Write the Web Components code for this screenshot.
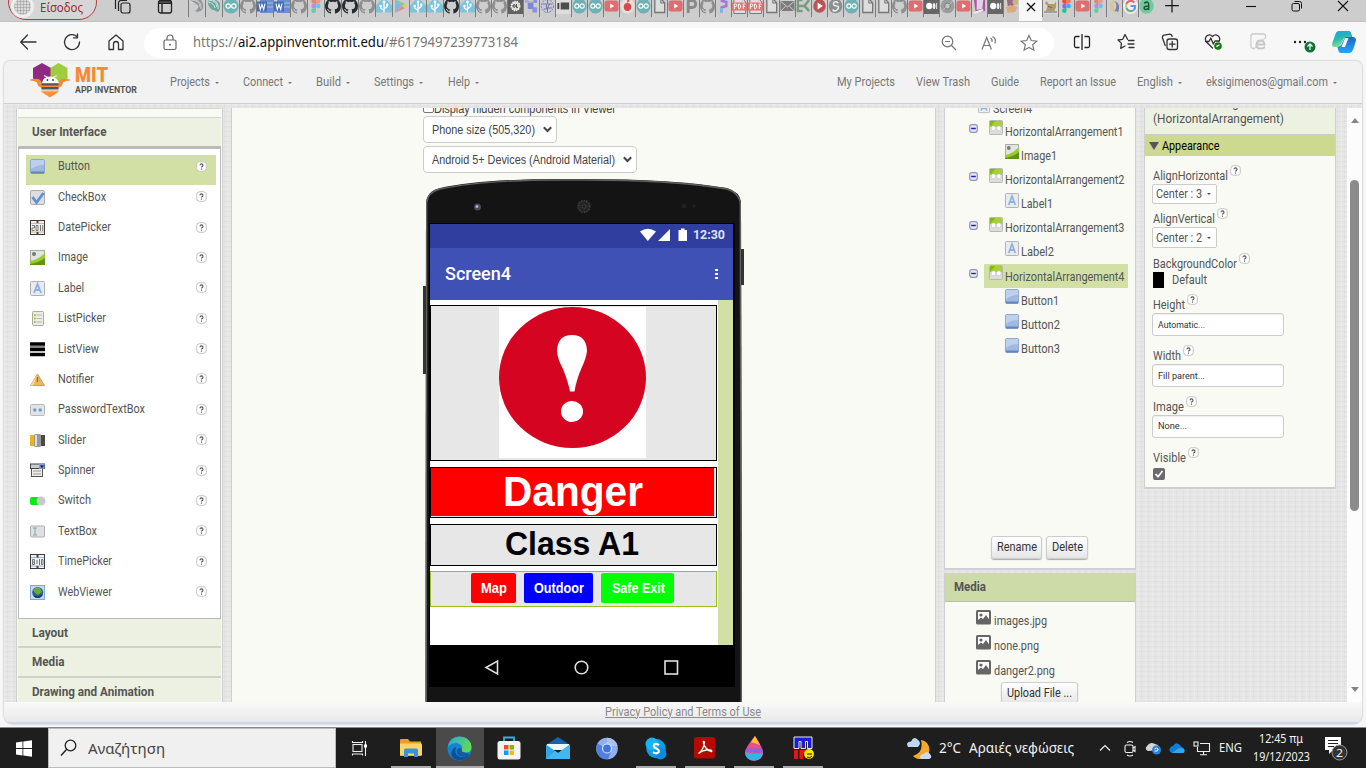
<!DOCTYPE html>
<html lang="el">
<head>
<meta charset="utf-8">
<title>MIT App Inventor</title>
<style>
html,body{margin:0;padding:0;width:1366px;height:768px;overflow:hidden;background:#f7f7f7}
body{font-family:Roboto,"Noto Sans",sans-serif}
</style>
</head>
<body>
<app-desktop></app-desktop>
<script>
const GH='M8 0C3.58 0 0 3.58 0 8c0 3.54 2.29 6.53 5.47 7.59.4.07.55-.17.55-.38 0-.19-.01-.82-.01-1.49-2.01.37-2.53-.49-2.69-.94-.09-.23-.48-.94-.82-1.13-.28-.15-.68-.52-.01-.53.63-.01 1.08.58 1.23.82.72 1.21 1.87.87 2.33.66.07-.52.28-.87.51-1.07-1.78-.2-3.64-.89-3.64-3.95 0-.87.31-1.59.82-2.15-.08-.2-.36-1.02.08-2.12 0 0 .67-.22 2.2.82.64-.18 1.32-.27 2-.27s1.36.09 2 .27c1.53-1.04 2.2-.82 2.2-.82.44 1.1.16 1.92.08 2.12.51.56.82 1.27.82 2.15 0 3.07-1.87 3.75-3.65 3.95.29.25.54.73.54 1.48 0 1.07-.01 1.93-.01 2.2 0 .21.15.46.55.38A8.01 8.01 0 0016 8c0-4.42-3.58-8-8-8z';
const figma=(o)=>`<g opacity="${o}"><path d="M8 1H5.7a2.3 2.3 0 0 0 0 4.7H8z" fill="#f24e1e"/><path d="M8 1h2.3a2.3 2.3 0 0 1 0 4.7H8z" fill="#ff7262"/><path d="M8 5.7H5.7a2.3 2.3 0 0 0 0 4.6H8z" fill="#a259ff"/><circle cx="10.3" cy="8" r="2.3" fill="#1abcfe"/><path d="M8 10.3H5.7A2.35 2.35 0 1 0 8 12.7z" fill="#0acf83"/></g>`;
const S='fill="none" stroke="#333" stroke-width="1.3" stroke-linecap="round" stroke-linejoin="round"';
/* name: [width, height, markup] */
const ICONS={
 swirlg:[16,16,'<path d="M2 2q5-3 10 0 4 5 1 10-4 3-7 1 4-2 3-6Q6 7 2 2z" fill="#8f9596"/><path d="M3 2q8 1 8 7M2 4q6 1 7 6M7 2q6 2 5 9" stroke="#ddd" fill="none" stroke-width=".8"/>'],
 swirlt:[16,16,'<path d="M2 3Q1 7 5 11l7 3 2-3V5L9 1 4 1z" fill="#69a69b"/><path d="M3 2q8 1 8 7M2 4q6 1 7 6M7 2q6 2 5 9" stroke="#d5e6e2" fill="none"/>'],
 ard:[16,16,'<circle cx="8" cy="8" r="7.6" fill="#6fb2b6"/><g fill="none" stroke="#fff" stroke-width="1.2"><circle cx="5.2" cy="8" r="2.2"/><circle cx="10.8" cy="8" r="2.2"/></g>'],
 ghg:[16,16,`<path d="${GH}" fill="#8e8e8e"/>`],
 ghb:[16,16,`<path d="${GH}" fill="#262b31"/>`],
 word:[16,16,'<rect x="3" y="1" width="13" height="14" fill="#6c8fcb"/><path d="M3 5h13M3 9h13" stroke="#a5bce0"/><rect x="0" y="3.5" width="10" height="10" fill="#456fb4"/><path d="M2 5.5l1.3 6L5 6.5l1.700 5L8 5.5" stroke="#fff" fill="none" stroke-width="1.1"/>'],
 figf:[16,16,figma(.55)], fig:[16,16,figma(1)],
 git:[16,16,'<path d="M8-.5L16 7.500v6L15 14.500H1L0 13.500V7.500z" fill="#7cc3de"/><path d="M8 14.500V4.500M8 12.500L4.700 10V8.500M8 11l3.300-2.500V7" stroke="#fff" fill="none" stroke-width="1.300"/><circle cx="8" cy="4" r="1.400" fill="#fff"/><circle cx="4.700" cy="8" r="1.300" fill="#fff"/><circle cx="11.300" cy="6.800" r="1.300" fill="#fff"/>'],
 play:[16,16,'<path d="M2 1v14l7-7z" fill="#7fb9dd"/><path d="M2 1l7 7 3-2.300z" fill="#86c79b"/><path d="M2 15l7-7 3 2.300z" fill="#e18a8c"/><path d="M9 8l3-2.300L15 8l-3 2.300z" fill="#e9c86f"/>'],
 ol:[16,16,'<rect width="16" height="16" fill="#626262"/><circle cx="8" cy="8" r="4.600" fill="#ddd"/><circle cx="8" cy="8" r="4.600" fill="none" stroke="#eee" stroke-dasharray="1.500 1" stroke-width="1.500"/><circle cx="6.500" cy="8" r="1.300" fill="none" stroke="#444"/><path d="M9 6v3.500h1.500" stroke="#444" fill="none"/>'],
 nodes:[16,16,'<path d="M3 4h6v6h4" stroke="#999" fill="none"/><rect x="1" y="1" width="4" height="4" fill="#a4aae0"/><rect x="4" y="5" width="6" height="6" fill="#7c86da"/><rect x="10" y="1" width="4" height="4" fill="#8a93dc"/><rect x="9" y="9.500" width="5" height="5" fill="#8a93dc"/>'],
 brain:[16,16,'<circle cx="8" cy="8" r="6.500" fill="#c8c8d8" stroke="#7d80a4" stroke-dasharray="2 1"/><path d="M3 6h4v5H4M8 2v4h5M8 14v-4h5M10 6l-2 4" stroke="#73769f" fill="none"/>'],
 med0:[16,16,'<rect width="16" height="16" fill="#ddd"/><rect x="1.500" y="5" width="2" height="6" fill="#444"/><rect x="5" y="4.500" width="9" height="7" fill="#4d4d4d"/>'],
 med:[16,16,'<rect width="16" height="16" fill="#666"/><circle cx="5.500" cy="8" r="3.200" fill="#fff"/><ellipse cx="10.700" cy="8" rx="1.500" ry="3.100" fill="#eee"/><rect x="13" y="5" width="1" height="6" fill="#eee"/>'],
 yt:[16,16,'<rect x=".5" y="2.500" width="15" height="11" rx="2.500" fill="#e26d6f"/><path d="M6.500 5.500v5L11 8z" fill="#fff"/>'],
 flame:[16,16,'<circle cx="8" cy="8" r="7.500" fill="#e8dede"/><circle cx="8" cy="9" r="4" fill="#d44a4c"/><path d="M8 5Q7 2 9 0l1 3z" fill="#d44a4c"/>'],
 doc:[16,16,'<path d="M3 .5h6.500L13.500 5v9.500H3z" fill="#ddd" stroke="#777" stroke-width="1.400"/><path d="M9.500 0v5h4" fill="none" stroke="#777" stroke-width="1.200"/>'],
 P:[16,16,'<path d="M4.500 15V2.500H9a3.500 3.500 0 0 1 0 7H5" stroke="#888" stroke-width="3" fill="none"/>'],
 ques:[16,16,'<path d="M5 2.500l6 1.500v4L6 9.500V15" stroke="#a574d8" stroke-width="2.600" fill="none"/><path d="M6 10v5" stroke="#7bb7e8" stroke-width="3"/>'],
 pdf:[16,16,'<path d="M2 0h9l3.500 4v11.500H2z" fill="#ddd" stroke="#777"/><rect x="0" y="4.500" width="16" height="8" fill="#e57373"/><path d="M2.500 11V6h1.300a1.200 1.200 0 0 1 0 2.600H2.500M7 6v4.800c3 .3 3-5 0-4.700M12 11V6h2.300M12 8.500h2" stroke="#fff" fill="none"/>'],
 mail:[16,16,'<rect x=".5" y="3" width="15" height="10" fill="#7c7c7c"/><path d="M1 3.500L8 9l7-5.500M1 13l5-5M15 13l-5-5" stroke="#ccc" fill="none"/>'],
 xg:[16,16,'<path d="M7 2H2v11h5M14 2l-5 6 5 5M2 8h7" stroke="#7b9a80" stroke-width="2.600" fill="none"/>'],
 rplay:[16,16,'<circle cx="8" cy="8" r="6.700" fill="#b95558"/><path d="M6 4.500v7L11.500 8z" fill="#fff"/>'],
 Sic:[16,16,'<circle cx="8" cy="8" r="7.300" fill="#8b8f92"/><path d="M11 5Q7 2.500 6 5t3 3 1 3.500-5 0" stroke="#eee" stroke-width="1.600" fill="none"/>'],
 disc:[16,16,'<circle cx="8" cy="8" r="7.300" fill="#9c9c9c"/><circle cx="8" cy="8" r="3" fill="#c6c6c6" stroke="#777"/><path d="M3 12L13 4" stroke="#bbb"/>'],
 pur:[16,16,'<path d="M2 1l12 1v11L4 15z" fill="#a9579f"/><path d="M5 1l7 1-1 9-6 1z" fill="#dfd3e4"/><path d="M2 15l10-3" stroke="#eee" stroke-width="2"/>'],
 orng:[16,16,'<path d="M3 1l5-1 4 4-3 5-5-1z" fill="#9d6687"/><path d="M2 9l5-2 7 2-2 5-8 1z" fill="#dba97b"/><circle cx="12" cy="4" r="3" fill="#c7b37d"/>'],
 cat:[16,16,'<rect width="16" height="16" fill="#d9d9d4"/><path d="M3 13l2-5-3-3 2-2 2 3 6 0 2-3 0 6-2 4z" fill="#b19a6c"/><path d="M1 14h14M5 8l5 2" stroke="#666"/>'],
 moonf:[16,16,'<path d="M8 1Q1 5 5 13l5 2Q4 8 9 1z" fill="#d8c985"/><path d="M8 3q7 2 4 11-2-1-4-1 4-5 0-10z" fill="#7e80a8"/>'],
 G:[16,16,'<circle cx="8" cy="8" r="8" fill="#eee"/><g fill="none" stroke-width="2.200"><path d="M12 4.500A5 5 0 0 0 3.600 6" stroke="#e0696a"/><path d="M3.600 6a5 5 0 0 0 0 4" stroke="#e5c05c"/><path d="M3.600 10A5 5 0 0 0 11.500 12" stroke="#68b083"/><path d="M11.500 12A5 5 0 0 0 13 8H8" stroke="#6d98dd"/></g>'],
 a:[16,16,'<circle cx="8" cy="8" r="7.700" fill="#6ecb9c"/><path d="M5.500 5.200Q10.300 2.500 10.300 6.500V12M10 8q-5 0-4.500 2.300T10 10.500" stroke="#24523c" stroke-width="1.600" fill="none"/>'],
 plus:[16,16,'<path d="M8 1v13.500M1.200 7.700h13.600" stroke="#111" stroke-width="1.200"/>'],
 min:[12,12,'<path d="M1 6.500h10" stroke="#111" stroke-width="1.100"/>'],
 rest:[12,12,'<rect x="1" y="3.500" width="7.500" height="7.500" rx="1.500" fill="none" stroke="#111"/><path d="M3.500 1.500H8.500a2 2 0 0 1 2 2V8.500" fill="none" stroke="#111"/>'],
 close:[12,12,'<path d="M1 1l10 10M11 1L1 11" stroke="#111" stroke-width="1.100"/>'],
 closes:[12,12,'<path d="M2 2l8 8M10 2L2 10" stroke="#111" stroke-width="1.300"/>'],
 wksp:[18,16,'<g fill="none" stroke="#222" stroke-width="1.200"><rect x="7" y="4" width="9" height="10" rx="2"/><path d="M4.500 12V4a2.500 2.500 0 0 1 2.500-2.500h6M1.500 10V2A2.500 2.500 0 0 1 4-.5h6"/></g>'],
 tabact:[16,16,'<rect x="1.500" y="1.500" width="13" height="12.500" rx="2" fill="none" stroke="#222" stroke-width="1.300"/><path d="M2 3h12M5 5v9" stroke="#222" stroke-width="1.400"/><path d="M1.500 4.500h13" stroke="#222"/>'],
 back:[18,18,`<path d="M17 9H2M8.500 2L1.700 9l6.800 7" ${S}/>`],
 refresh:[18,18,`<path d="M16.500 9A7.500 7.500 0 1 1 14 3.500M14.500.8v4h-4" ${S}/>`],
 home:[18,18,`<path d="M2 8L9 2l7 6v8.500h-4.500V11a2.500 2.500 0 0 0-5 0v5.500H2z" ${S}/>`],
 lock:[14,17,'<rect x="1" y="6" width="12" height="9.500" rx="1.500" fill="none" stroke="#666" stroke-width="1.200"/><path d="M4 6V4a3 3 0 0 1 6 0v2" fill="none" stroke="#666" stroke-width="1.200"/><circle cx="7" cy="10.700" r="1" fill="#666"/>'],
 zout:[16,16,'<circle cx="6.500" cy="6.500" r="5.300" fill="none" stroke="#777" stroke-width="1.200"/><path d="M4 6.500h5M10.500 10.500L15 15" stroke="#777" stroke-width="1.200"/>'],
 read:[17,16,'<path d="M1 14.500L5.700 2.500l4.700 12M2.800 10.500h6M9.500 3q2 1 1.500 4M11.500 1.500q4 2 2.500 7" fill="none" stroke="#777" stroke-width="1.200"/>'],
 star:[18,18,'<path d="M9 1.500l2.300 5 5.500.6-4.100 3.700 1.200 5.400L9 13.500l-4.900 2.700 1.200-5.400L1.200 7.100l5.500-.6z" fill="none" stroke="#777" stroke-width="1.200"/>'],
 split:[18,16,'<path d="M9 0v16M6.500 2.500H3a1.500 1.500 0 0 0-1.500 1.500v8A1.500 1.500 0 0 0 3 13.500h3.500M11.500 2.500H15a1.500 1.500 0 0 1 1.500 1.500v8a1.500 1.500 0 0 1-1.500 1.500h-3.500" fill="none" stroke="#222" stroke-width="1.300"/>'],
 fav:[18,18,`<path d="M10.500 6.300L8 1.500 5.700 6.300 1 7l3.500 3.400-.8 5L8 13M11.500 7.500H17M11 11h6M12 14.500h5" ${S}/>`],
 coll:[18,18,`<rect x="6" y="6" width="10.500" height="10.500" rx="2.200" ${S}/><path d="M11.200 8.500v5.500M8.500 11.200H14M4.200 12.500L1.500 5Q1 3 3 2.200L9 1.200q1.700 0 2.200 2.300" ${S}/>`],
 heart:[20,18,`<path d="M8.500 15L2.200 8.800C-.5 4 5-.5 8.500 3.500 12-.5 17.500 4 15 8.500M1.500 8.500H5l1.800-3.500 2.500 6 1.700-3h4" ${S}/><circle cx="14" cy="13" r="3.800" fill="#107c10"/><path d="M12.300 13.600l3.200-1.800" stroke="#fff" stroke-width="1.300"/>`],
 ie:[17,17,'<path d="M5 15.500H3a2 2 0 0 1-2-2V3a2 2 0 0 1 2-2h10.500a2 2 0 0 1 2 2V5" fill="none" stroke="#ccc" stroke-width="1.300"/><path d="M6.500 11.500h8Q14 7.500 10.500 7.500T6.500 11.500t4 4 3.500-2" fill="none" stroke="#c6c6c6" stroke-width="2"/><path d="M5 15Q9 7 16 5" fill="none" stroke="#ccc"/>'],
 dots:[26,20,'<g fill="#222"><circle cx="4" cy="10" r="1.200"/><circle cx="9" cy="10" r="1.200"/><circle cx="14" cy="10" r="1.200"/></g><circle cx="19" cy="15" r="5.500" fill="#0f7237"/><path d="M19 18v-6M16.500 14.500l2.500-2.700 2.500 2.700" stroke="#fff" fill="none" stroke-width="1.200"/>'],
 copilot:[26,24,'<defs><linearGradient id="g1" x1="0" y1="0" x2=".4" y2="1"><stop offset="0" stop-color="#1f9fd8"/><stop offset=".5" stop-color="#22b9b8"/><stop offset="1" stop-color="#8fe28b"/></linearGradient><linearGradient id="g2" x1="0" y1="0" x2="0" y2="1"><stop offset="0" stop-color="#174fb8"/><stop offset="1" stop-color="#27a6f2"/></linearGradient></defs><path d="M15 1h2.500q2 0 2.800 3l.7 3q4-.5 4 3.500l-2.500 8q-1.500 4.500-4.500 4.500h-8q-2.500 0-3-4l-1-3 4-.5L14 7z" fill="url(#g2)"/><path d="M17 1H8Q5.500 1 4.500 4L1.500 12.500Q0 17 4 17h3q2 0 3-3l2.500-5q1-2 3-2h5L19.500 3q-.5-2-2.500-2z" fill="url(#g1)"/><path d="M14 8h3.500l-3.500 9h-3.500z" fill="#f7f7f7"/>'],
 button:[15,15,'<rect x=".5" y=".5" width="14" height="14" rx="1.500" fill="#9fb9e2" stroke="#8ea6cc"/><path d="M1 1h13v5Q7 6 1 10z" fill="#bdd0ee"/><path d="M1 13.500h13" stroke="#6685bb" stroke-width="2"/>'],
 checkbox:[15,15,'<rect x=".5" y=".5" width="14" height="14" rx="1.500" fill="#dcdee0" stroke="#a9abad"/><path d="M2.500 7l4 5.500L13.500 3" stroke="#5f8fd6" stroke-width="2.800" fill="none"/>'],
 date:[15,15,'<rect x=".5" y=".5" width="14" height="14" fill="#efefef" stroke="#3c3c3c"/><path d="M1 3.500h13M1 12h13" stroke="#d7b68f"/><path d="M2 5.500h2.500v2.500H2v2.500h2.500M6 5.500h2v5H6zM10.500 5v6M12.700 5v6" fill="none" stroke="#777"/><path d="M7.500 0v3M7.500 12v3" stroke="#444" stroke-width="2"/>'],
 time:[15,15,'<rect x=".5" y=".5" width="14" height="14" fill="#eef1f3" stroke="#3c3c3c"/><path d="M1 3.500h13M1 12h13" stroke="#9ebbd1"/><path d="M2.500 5.500h2v5h-2zM2.500 8h2M7 6v4M9.500 5v6M11.500 5.500H13v5h-1.500z" fill="none" stroke="#777"/><path d="M7.500 0v3.500M7.500 12v3" stroke="#444" stroke-width="2"/>'],
 image:[15,15,'<rect x=".5" y=".5" width="14" height="14" fill="#e2e4e0" stroke="#a9aba5"/><circle cx="4" cy="4" r="2" fill="#777"/><path d="M0 11Q8 10 15 3v12H0z" fill="#9bcb2c"/><path d="M0 14Q8 13 15 8v7H0z" fill="#5f9414"/>'],
 label:[15,15,'<rect x=".5" y=".5" width="14" height="14" rx="1" fill="#e9ebee" stroke="#aeb0b3"/><path d="M4 12L7.500 3 11 12M5 9h5" stroke="#8cb0e2" stroke-width="1.800" fill="none"/>'],
 listp:[15,15,'<rect x="2.500" y=".5" width="11" height="14" rx="1" fill="#ecece6" stroke="#aaa"/><path d="M6.500 4H12M6.500 7.500H12M6.500 11H12" stroke="#b8b8b8"/><path d="M4 4h1.800M4 7.500h1.800M4 11h1.800" stroke="#a2cc36" stroke-width="1.800"/>'],
 listv:[15,15,'<path d="M0 2h15M0 7.300h15M0 12.600h15" stroke="#000" stroke-width="3.400"/><path d="M0 4.500h15M0 10h15" stroke="#888"/>'],
 notif:[15,15,'<path d="M7.500 2L14.500 13.500H.5z" fill="#efb75c" stroke="#b9a17c"/><path d="M7.500 2L3 13.500H.5z" fill="#f7dca9"/><path d="M7.500 5v5" stroke="#a87420" stroke-width="1.400"/>'],
 pass:[15,15,'<rect x=".5" y="2.500" width="14" height="11" rx="1" fill="#e0e3e7" stroke="#b7b9bc"/><circle cx="4.800" cy="8" r="1.700" fill="#7199d4"/><circle cx="10.200" cy="8" r="1.700" fill="#7199d4"/>'],
 slider:[15,15,'<rect y="2" width="6" height="11" fill="#eeb21b"/><rect x="10" y="2" width="5" height="11" fill="#4a4a4a"/><rect x="4" y="1" width="7" height="13" rx="1.500" fill="#999"/><path d="M6 2v11" stroke="#ddd" stroke-width="2"/>'],
 spinner:[15,15,'<rect x="1.500" y="4" width="11" height="9.500" fill="#eee" stroke="#555"/><rect x=".5" y="1" width="14" height="4.500" fill="#c8ccd3" stroke="#444"/><rect x="9" y=".8" width="5.500" height="5" fill="#7fa0e0"/><path d="M10 2.500h4L12 5z" fill="#111"/><path d="M3 8h8M3 11h8" stroke="#999"/>'],
 sw:[15,15,'<rect y="4" width="12" height="8" rx="2" fill="#0bea14"/><circle cx="11" cy="8" r="4.500" fill="#c9c9c9"/>'],
 textbox:[15,15,'<rect x=".5" y="2" width="14" height="11" rx="1" fill="#dfe0e2" stroke="#b0b1b3"/><path d="M3 4h4M3 11h4M5 4v7" stroke="#8c9cc0"/>'],
 web:[15,15,'<rect x=".5" y=".5" width="14" height="14" fill="#c7daf2" stroke="#84a6d4"/><circle cx="7.700" cy="7.500" r="5.500" fill="#2c5c92"/><path d="M3 5q4-4 7-2l2 4-4 3-3-2z" fill="#6bab3c"/><path d="M4 11q4 3 8-1" stroke="#163a5c" fill="none" stroke-width="1.500"/>'],
 harr:[15,15,'<rect x=".5" y=".5" width="14" height="14" rx="1" fill="#dcdcda" stroke="#b5b7ae"/><path d="M1 1h13v6H1z" fill="#a8d03c"/><path d="M1 7V1h6z" fill="#86b520"/><rect x="2.500" y="6" width="4.500" height="4.500" rx="1.500" fill="#fff" stroke="#bbb" stroke-width=".5"/><rect x="8.200" y="6" width="4.500" height="4.500" rx="1.500" fill="#fff" stroke="#bbb" stroke-width=".5"/>'],
 help:[11,11,'<rect x=".7" y=".7" width="9.600" height="9.600" rx="3" fill="#fff" stroke="#c4c4c4"/><path d="M4 4.300Q4 2.900 5.500 2.900T7 4.200 5.500 6V6.600M5.500 7.500v1.200" fill="none" stroke="#555" stroke-width="1.100"/>'],
 tog:[9,9,'<rect x=".7" y=".7" width="7.600" height="7.600" rx="2" fill="#e6e8f4" stroke="#8a93c4" stroke-width="1.200"/><path d="M2.200 4.500h4.600" stroke="#2222aa" stroke-width="1.400"/>'],
 pic:[15,15,'<rect width="15" height="14.500" rx="1.500" fill="#666"/><rect x="2" y="2" width="11" height="9.500" fill="#fff"/><circle cx="5" cy="5" r="1.600" fill="#666"/><path d="M2 12.700V10L5 7.500l2 1.500 3-4 3.500 5v2.700z" fill="#666"/>'],
 win:[16,17,'<path d="M0 2.400L6.500 1.500V8H0zM7.300 1.400L16 .2V8H7.300zM0 8.900h6.500v6.500L0 14.500zM7.300 8.900H16v7.900l-8.700-1.200z" fill="#fff"/>'],
 mag:[18,18,'<circle cx="10.500" cy="6.500" r="5.300" fill="none" stroke="#222" stroke-width="1.300"/><path d="M6.500 10.500L1 16.500" stroke="#222" stroke-width="1.400"/>'],
 tview:[18,17,'<g fill="none" stroke="#eee" stroke-width="1.100"><rect x="2" y="4.500" width="9" height="7"/><path d="M1.500 1v1.500h10V1M1.500 15.500V14h10v1.500M14.500 1v15"/></g><rect x="13" y="4.500" width="3" height="3" fill="#fff"/>'],
 folder:[22,20,'<path d="M0 2q0-1 1-1h7l2 2.500h11V18H0z" fill="#e8a020"/><path d="M0 5.500h21q1 0 1 1V17.500H1q-1 0-1-1z" fill="#fbd664"/><path d="M4 19v-7q0-1.500 1.500-1.500h11Q18 10.500 18 12v7h-4v-3.500H8V19z" fill="#3f91d8"/>'],
 edge:[25,25,'<defs><linearGradient id="e1" x1="0" y1="0" x2="1" y2=".4"><stop offset="0" stop-color="#2aa5e0"/><stop offset="1" stop-color="#5fd95a"/></linearGradient></defs><circle cx="12.500" cy="12.500" r="12" fill="#1484d2"/><path d="M.8 11Q2.500.5 12.500.5 24.500 1.500 24.500 12q-.5 4.500-6 4.500-5 0-3.500-3Q16 8 9.500 7 4 7 .8 11z" fill="url(#e1)"/><path d="M9.500 11q-3 5 1 8.500 5 3.500 12-1Q19 25 11 24.300 3 22 4.500 16q1-4 5-5z" fill="#0c4f9c"/><path d="M15 13.500q-2-3-5 0-2 6 5 7 5 .5 8-2-2-1-5.500-2-3.500-.5-2.500-3z" fill="#17599d"/>'],
 store:[24,24,'<path d="M7 6V1.500h10V6" fill="none" stroke="#2fb0e6" stroke-width="1.800"/><rect x=".5" y="5" width="23" height="18.500" rx="2.500" fill="#f4f4f4"/><path d="M7 9h4.500v4.500H7z" fill="#e8502a"/><path d="M12.500 9H17v4.500h-4.500z" fill="#7fba00"/><path d="M7 14.500h4.500V19H7z" fill="#0f9fe8"/><path d="M12.500 14.500H17V19h-4.500z" fill="#fbb809"/>'],
 mailw:[24,24,'<path d="M0 9L12 1l12 8z" fill="#1565ad"/><path d="M1 8h22v6H1z" fill="#eef6fb"/><path d="M0 8.500L12 17l12-8.500V23H0z" fill="#2ea5e6"/><path d="M0 23l9-8 3 2 12-8.500V23z" fill="#40b9f2"/>'],
 chrm:[22,23,'<circle cx="11" cy="11.500" r="10.800" fill="#8fb0ec"/><path d="M11 .7A10.800 10.800 0 0 1 21.500 9H11z" fill="#a9c2f3"/><path d="M1.500 6.500A10.800 10.800 0 0 0 12 22.300L15 14z" fill="#4f7fe0"/><circle cx="11" cy="11.500" r="5" fill="#dfe8fb"/><circle cx="11" cy="11.500" r="3.900" fill="#3f74dd"/>'],
 skype:[22,23,'<circle cx="11" cy="11.500" r="9.700" fill="#0a9fe8"/><circle cx="7" cy="7" r="6.500" fill="#1ab2f2"/><circle cx="15.500" cy="16.500" r="6" fill="#0c8ade"/><path d="M14 8.200Q11.500 6 9.200 7.500 7.800 10 11 11.300t2.700 3.800Q11.500 17.500 8 15.200" fill="none" stroke="#fff" stroke-width="2.200"/>'],
 acro:[22,22,'<rect width="21.500" height="21.500" rx="3" fill="#b30b00"/><path d="M4.500 16.500q5-3.500 6-11.500Q9 3.500 9.500 6q1.500 6.500 8 8.500 1.500-2-5-1.500-5 .5-8 3.500z" fill="none" stroke="#fff" stroke-width="1.400"/>'],
 drop:[20,25,'<path d="M11 0Q19 12 19 16.500A8.500 8 0 0 1 1 16.500Q1 12 11 0z" fill="#e8508f"/><path d="M11 0Q14 5 16 9L7 6z" fill="#fbc22e"/><path d="M3 12q8 1 15 0l1 4.500Q10 17 1 15.500z" fill="#8f62dd"/><path d="M1 16q8 3 18 1-1 7.500-9 7.500T1 16z" fill="#2fb6ea"/>'],
 mirc:[23,25,'<path d="M2 12.500V1h18v11.500h-4.500V5.500h-2v7H9v-7H7v7z" fill="#1c1cd8" stroke="#e8e8e8" stroke-width="1"/><path d="M2 14h4v9H2z" fill="#e81414"/><path d="M7.500 14h6v3.500h-2.500V23H7.500z" fill="#e81414"/><circle cx="17" cy="18" r="5" fill="#ffe500"/><path d="M15 18h5M15 21q3 2 5-1" stroke="#111" fill="none"/>'],
 wx:[26,25,'<path d="M15 4a9.500 9.500 0 1 1-8 16Q18 17 15 4z" fill="#f4a92a"/><path d="M2 11Q-1 6 5 5.500 8-.5 12 4q4 3 0 7z" fill="#bcd6f4"/><path d="M14 22q0-4 4-4 3-4 6 0 3 4-1 5h-8z" fill="#c8dcf6"/>'],
 chev:[12,8,'<path d="M1 6.500l5-5 5 5" stroke="#eee" stroke-width="1.200" fill="none"/>'],
 meet:[12,17,'<g fill="none" stroke="#eee" stroke-width="1.100"><rect x="1" y="5" width="8" height="7.500" rx="1.500"/><path d="M9 8l2-1.500v5L9 10M3 2.500q3-2 6 0M3 15q3 2 6 0"/></g>'],
 cloudg:[17,14,'<path d="M3 10Q-1 8 2 5q3-5 8-2 5 1 5 6z" fill="#d5d5d5"/><circle cx="11.500" cy="9" r="4.500" fill="#2a86d8"/><path d="M9.500 10q3 1 4-2M9.500 8q2-2 3.500 0" stroke="#fff" fill="none"/>'],
 cloud:[16,12,'<path d="M3 11Q-1 9 1 6q1-2 3-2 3-5 7-1 1 2 2 2 4 2 2 6z" fill="#0f7fd6"/><path d="M3 11l7-5 5 1q1 3-1 4z" fill="#36a5ee"/>'],
 net:[18,15,'<g fill="none" stroke="#eee" stroke-width="1.100"><path d="M7 2.500h9.500v8H4.500V6M10.500 10.500v3M7 13.700h7"/><rect x="1" y="1" width="4" height="4"/></g>'],
 note:[26,26,'<path d="M1 2h16v13H9l-4 4v-4H1z" fill="#fff"/><path d="M4 5.500h10M4 8.500h10M4 11.500h6" stroke="#222"/><circle cx="15.500" cy="17.500" r="7.500" fill="#333" stroke="#999"/>'],
 bee:[42,36,'<path d="M13 0l9 5v11l-9 4-9-4.500V5z" fill="#8f2a83"/><path d="M29.500 0l9 5v11l-9 4-8-4V5z" fill="#a0cc3f"/><path d="M1 16.500q12-3 12 5v3q-4 0-5-5-3-2-7-2M41 16.500q-12-3-12 5v3q4 0 5-5 3-2 7-2" fill="#f58a33"/><path d="M13 20Q14 13.500 21 13.500T30 20z" fill="#fff"/><path d="M15 12.500l4 2M28 12.500l-4 2" stroke="#eee" stroke-width="1.300"/><circle cx="18.500" cy="17" r=".9" fill="#333"/><circle cx="24" cy="17" r=".9" fill="#333"/><path d="M12.500 20h17v9l-8.500 5.500L12.500 29z" fill="#f6913b"/><path d="M12.500 21.500h17M12.500 25h17" stroke="#565656" stroke-width="1.900"/><path d="M12.500 27.800h17" stroke="#e9e9e9"/>']
};

function define(name,css,html,after){
  customElements.define(name,class extends HTMLElement{
    connectedCallback(){
      if(this.shadowRoot)return;
      const r=this.attachShadow({mode:'open'});
      const body=typeof html==='function'?html(this):html;
      r.innerHTML=`<style>:host{display:block;box-sizing:border-box}*{box-sizing:border-box}${css}</style>${body}`;
      if(after)after(this,r);
    }
  });
}
const I=(n,st='')=>`<ui-icon name="${n}" style="${st}"></ui-icon>`;
const T=(t,w,s,st='')=>`<ui-text w="${w}" style="font-size:${s}px;${st}">${t}</ui-text>`;

/* inline SVG icon; size comes from the table unless w/h are given */
define('ui-icon',':host{display:block;flex:none;line-height:0}svg{display:block;overflow:visible}',h=>{
  const [w,ht,m]=ICONS[h.getAttribute('name')];
  return `<svg width="${h.getAttribute('w')||w}" height="${h.getAttribute('h')||ht}" viewBox="0 0 ${w} ${ht}" ${h.hasAttribute('w')?'preserveAspectRatio="none"':''}>${m}</svg>`;
});
/* one line of text condensed or widened to a set width */
define('ui-text',':host{display:block;flex:none;line-height:16px;white-space:nowrap}span{display:inline-block;vertical-align:top;transform-origin:0 0}','<span><slot></slot></span>',(h,r)=>{
  const w=+h.getAttribute('w'), s=r.querySelector('span');
  h.style.width=w+'px';
  s.style.transform=`scaleX(${(w/s.getBoundingClientRect().width).toFixed(4)})`;
});

const TABS1='swirlg swirlt ard ghg word word ghg figf ghb ghb ghg git play git git ghb git ghg ghg ol nodes brain med0 ard ard yt flame ard doc yt P ghg ques pdf pdf doc mail xg rplay Sic ard doc doc ghg yt med disc yt pur med orng'.split(' ');
const TABS2='cat fig yt figf moonf G a'.split(' ');
define('tab-strip',`:host{height:22px;background:#cdcdcd;overflow:hidden;display:flex;align-items:flex-start;border-bottom:1px solid #c2c2c2}
.prof{width:89px;height:36px;margin:-16px 0 0 8px;border:1.5px solid #b53a3e;border-radius:18px;display:flex;align-items:center;padding:9px 0 0 2px;background:#d6d6d6;flex:none}
.av{width:23px;height:23px;border-radius:50%;background:repeating-linear-gradient(90deg,#8886 0 1px,#fff0 1px 3px),repeating-linear-gradient(#8886 0 1px,#fff0 1px 3px) #d9d9d9;border:3px solid #eee;margin:0 6px 0 0;flex:none}
.c{width:16px;flex:none;height:17px;border-left:1px solid #7d7d7d;overflow:hidden}.c.w{width:17px}
.c ui-icon{margin-top:-2px}
.act{width:23px;height:22px;flex:none;background:#f7f7f7;display:flex;justify-content:center;padding-top:1px}
`,`<div class="prof"><div class="av"></div>${T('Είσοδος',43,13,'color:#a3282d;font-family:Noto Sans')}</div>
${I('wksp','margin:-1px 0 0 17px')}${I('tabact','margin:-1px 0 0 25px')}<div style="width:15px;flex:none"></div>
${TABS1.map((t,i)=>`<div class="c ${i<15?'w':''}"><ui-icon name="${t}" w="${i<15?16:15}" h="16"></ui-icon></div>`).join('')}<div class="act">${I('closes')}</div>
${TABS2.map(t=>`<div class="c"><ui-icon name="${t}" w="15" h="16"></ui-icon></div>`).join('')}
${I('plus','margin:-2px 0 0 10px')}${I('min','margin:0 0 0 65px')}${I('rest','margin:0 0 0 34px')}${I('close','margin:0 0 0 34px')}`);

define('address-bar',`:host{height:39px;background:#f7f7f7;display:flex;align-items:center;padding:0 0 0 6px}
.b{width:44px;display:flex;justify-content:center;flex:none}
.pill{width:910px;height:30px;border-radius:15px;background:#fff;margin:2px 6px 0;display:flex;align-items:center;padding:0 5px 0 19px;flex:none}
.url{display:flex;margin:-1px 0 0 16px;font-family:"Noto Sans",sans-serif;color:#777;flex:1}.s{width:40px;display:flex;justify-content:center}`,
`${['back','refresh','home'].map(n=>`<div class="b">${I(n)}</div>`).join('')}
<div class="pill">${I('lock')}<div class="url">${T('https://',45,14.2)}${T('ai2.appinventor.mit.edu',146,14.2,'color:#111')}${T('/#6179497239773184',134,14.2)}</div>
${['zout','read','star'].map(n=>`<div class="s">${I(n)}</div>`).join('')}</div>
${['split','fav','coll','heart','ie','dots','copilot'].map(n=>`<div class="b" style="${n=='copilot'?'width:40px':n=='dots'?'padding-left:4px':n=='split'?'padding-right:1px':''}">${I(n)}</div>`).join('')}`);

const NAV=[['Projects',40,32.5],['Connect',40,24],['Build',25,24.5],['Settings',40,24],['Help',22,24.5]];
define('site-header',`:host{height:43px;background:#f2f2f2;border-bottom:1px solid #d0d0d0;display:flex;align-items:center;padding-left:25px;color:#777}
.logo{margin-left:4px}.caret{border:2px solid transparent;border-top:2.5px solid #777;border-bottom:0;width:4px;flex:none;margin:1px 0 0 5px}
.item{display:flex;align-items:center;flex:none}.sp{flex:1}`,
`${I('bee','margin-top:-3px')}<div class="logo">${T('MIT',33,20,'color:#f58a33;font-weight:900;line-height:15px;margin-top:-2px')}${T('APP INVENTOR',62,9.8,'color:#555;font-weight:700;line-height:11px;margin-top:1px')}</div>
${NAV.map(n=>`<div class="item" style="margin-left:${n[2]}px">${T(n[0],n[1],12.2)}<div class="caret"></div></div>`).join('')}<div class="sp"></div>
<div class="item">${T('My Projects',58,12.2)}${T('View Trash',54,12.2,'margin-left:21px')}${T('Guide',28,12.2,'margin-left:21px')}${T('Report an Issue',76,12.2,'margin-left:21.5px')}${T('English',36,12.2,'margin-left:21px')}<div class="caret"></div>${T('eksigimenos@gmail.com',122,12.2,'margin-left:24px')}<div class="caret" style="margin-right:25px"></div></div>`);

const PAL=[['button','Button',32],['checkbox','CheckBox',48],['date','DatePicker',53],['image','Image',30],['label','Label',26],['listp','ListPicker',48],['listv','ListView',41],['notif','Notifier',36],['pass','PasswordTextBox',87],['slider','Slider',28],['spinner','Spinner',37],['sw','Switch',33],['textbox','TextBox',39],['time','TimePicker',54],['web','WebViewer',54]];
define('palette-row',`:host{height:30.39px;display:flex;padding:4.3px 9px 0 4px;align-items:flex-start}:host([sel]){background:#d2e0a6}.t{flex:1;margin:-1px 0 0 12.5px}ui-icon.h{margin-top:1.5px}`,
 h=>{const p=PAL[h.getAttribute('i')];return `${I(p[0])}<div class="t">${T(p[1],p[2],12.2)}</div><ui-icon class="h" name="help"></ui-icon>`});
define('palette-panel',`:host{width:207px;background:#f8faf3;border:solid #cfcfcf;border-width:0 1px;padding:0 1px;color:#555;flex:none;height:594px;overflow:hidden}
.top{height:10px;border-top:1px solid #d4d4d4;border-bottom:1px solid #d4d4d4}
.hd{height:29.5px;background:#edf1e1;border-bottom:2px solid #d0d1cc;display:flex;align-items:center;padding:1px 0 0 14px;font-weight:700}
.box{border:1px solid #bbb;background:#fff;height:471px;padding:6px 4px 0 7px}`,
`<div class="top"></div><div class="hd" style="border-bottom-color:#bbb;height:30px;padding-top:0">${T('User Interface',74.5,12.8)}</div><div class="box">${PAL.map((p,i)=>`<palette-row i="${i}" ${i?'':'sel'}></palette-row>`).join('')}</div>
<div class="hd" style="height:29px">${T('Layout',36,12.8)}</div><div class="hd">${T('Media',32.5,12.8)}</div><div class="hd">${T('Drawing and Animation',122,12.8)}</div>`);

define('select-box',`:host{background:#fff;border:1px solid #ccc;border-radius:4px;height:27px;display:flex;align-items:center;padding:0 4px 0 8px;justify-content:space-between;font-family:"Liberation Sans",Arial,sans-serif;color:#444}`,
 `<slot></slot><svg width="9" height="7" viewBox="0 0 9 7"><path d="M.8 1.200l3.700 3.800L8.200 1.200" fill="none" stroke="#444" stroke-width="2"/></svg>`);

define('phone-frame',`:host{display:grid;width:319px;height:523px}
:host>*{grid-area:1/1}.scr{margin:45px 0 0 7px;width:303px;height:463px;background:#000;display:flex;flex-direction:column}
.st{height:24px;background:#303f9f;display:flex;align-items:center;justify-content:flex-end;padding:0 8px 2px 0;color:#fff}
.tb{height:52px;background:#3f51b5;color:#fff;display:flex;align-items:center;justify-content:space-between;padding:0 15px 0 15px}
.dots{display:grid;gap:1.5px}.dots i{width:3px;height:2.5px;background:#fff}
.body{height:345px;display:flex;background:#d2e0a6}.form{width:288px;background:#fff;padding-top:5px}
.ar{width:287px;border:1px solid #000;background:#e7e7e7;display:flex;justify-content:center;font-family:"Liberation Sans",Arial,sans-serif;font-weight:700;margin-bottom:6px}
.dg{background:red;width:283px;height:48px;color:#fff;display:flex;justify-content:center;align-items:center}
.bt{height:29.5px;border-radius:2px;color:#fff;display:flex;align-items:center;justify-content:center;margin-top:1px}
.nav{height:42px;flex:none;display:flex;align-items:center;justify-content:center}`,
`<svg width="319" height="523" viewBox="0 0 319 523" style="overflow:visible"><rect x="0" y="107" width="4" height="88" fill="#333"/><rect x="317" y="70" width="4" height="36" fill="#333"/>
<path d="M2.500 523L3 24Q4 12 17 9 60 0 137 0h23Q250 0 304 9q13 4 14 14l1 500z" fill="#141414"/><path d="M3.200 523L3.700 24Q4.700 13 17 10 60 1 137 1h23Q250 1 304 10q12 4 13.300 14l1 499" fill="none" stroke="#606060" stroke-width="1.400"/>
<circle cx="54.500" cy="28" r="3.500" fill="#444a5c"/><circle cx="54" cy="27.500" r="1.500" fill="#a9b0d0"/><circle cx="161" cy="27.500" r="7" fill="#222"/><circle cx="161" cy="27.500" r="5.500" fill="none" stroke="#444" stroke-dasharray="1 1.500" stroke-width="2"/><circle cx="161" cy="27.500" r="2" fill="none" stroke="#555" stroke-dasharray="1 1"/><circle cx="261" cy="27" r="2.500" fill="#202020"/><circle cx="271" cy="27" r="1.800" fill="#202020"/><rect x="6" y="44" width="306" height="464" fill="#000"/></svg>
<div class="scr"><div class="st"><svg width="48" height="14" viewBox="0 0 48 14" style="margin-right:6px"><path d="M1 3.500Q8.500-2 17 3.500L8.800 13z M19 13h12V1zM39.500 13V2h2.500V.5h3.500V2H48v11z" fill="#fff"/></svg>${T('12:30',32,12.8,'font-weight:700;color:#dfe2f2')}</div>
<div class="tb">${T('Screen4',66,18.5,'font-weight:500;line-height:24px')}<div class="dots"><i></i><i></i><i></i></div></div>
<div class="body"><div class="form">
<div class="ar" style="height:156px;padding-right:2px"><svg width="147" height="151" viewBox="0 0 147 151" style="background:#fff;margin-top:1px"><ellipse cx="73.500" cy="70.500" rx="73.500" ry="70.500" fill="#d50522"/><path d="M73 28q14.500 0 15 16-1 8-5.500 17-5.500 13-7 23.500h-4.500q-2-10-7-22.500-5.500-10-6-18 .5-16 15-16z" fill="#fff"/><ellipse cx="73" cy="104.500" rx="11" ry="10.500" fill="#fff"/></svg></div>
<div class="ar" style="height:51px;justify-content:flex-start"><div class="dg">${T('Danger',140,42.5,'line-height:48px')}</div></div>
<div class="ar" style="height:42px;align-items:center;margin-bottom:5px">${T('Class A1',134,32.5,'line-height:36px;margin:-2px 0 0 -4px;color:#000')}</div>
<div class="ar" style="height:36px;border-color:#9abf1e;gap:8px;padding-right:2px"><div class="bt" style="width:45px;background:red">${T('Map',26,14)}</div><div class="bt" style="width:69px;background:#00f">${T('Outdoor',50,14)}</div><div class="bt" style="width:73px;background:#0f0;padding-left:2px">${T('Safe Exit',53,14)}</div></div>
</div></div><div class="nav"><svg width="303" height="42" viewBox="0 0 303 42"><g fill="none" stroke="#e0e0e0" stroke-width="1.600"><path d="M67.500 16v13L56 22.500z"/><circle cx="151.500" cy="22.500" r="6.300"/><rect x="235" y="16" width="12.500" height="13"/></g></svg></div></div>`);

define('viewer-panel',`:host{width:705px;margin-left:8px;background:#f8faf3;border:solid #cfcfcf;border-width:0 1px;flex:none;height:594px;overflow:hidden;color:#444;padding-left:191px}
.ck{display:flex;height:8px;align-items:flex-end;font-family:"Liberation Sans",Arial,sans-serif}.ck i{width:11px;height:12px;border:1px solid #777;border-radius:2px;margin-bottom:3.5px;background:#fff;flex:none}`,
`<div class="ck"><i></i>${T('Display hidden components in Viewer',182,12,'margin-bottom:-1px')}</div>
<select-box style="width:134px;margin:0 0 3px">${T('Phone size (505,320)',103,12.3)}</select-box><select-box style="width:214px;margin:0 0 6px">${T('Android 5+ Devices (Android Material)',183,12.3)}</select-box><phone-frame></phone-frame>`);

const TREE=[['harr','HorizontalArrangement1',118.5],['image','Image1',36],['harr','HorizontalArrangement2',119.5],['label','Label1',32],['harr','HorizontalArrangement3',119.5],['label','Label2',33],['harr','HorizontalArrangement4',119.5],['button','Button1',38],['button','Button2',39],['button','Button3',39]];
define('tree-row',`:host{height:24.2px;display:flex;align-items:flex-start;padding-left:24px}.n{display:flex;padding:1.5px 3px 0 5px;height:24px}:host([sel]) .n{background:#d2e0a6}ui-text{margin:3.5px 0 0 2px}.tg{width:10px;margin:5.5px 5px 0 0}`,
 h=>{const i=+h.getAttribute('i'),t=TREE[i],k=t[0]=='harr';return `<div class="tg">${k?I('tog'):''}</div><div class="n" style="${k?'':'margin-left:16px'}"><ui-icon name="${t[0]}" w="14" h="15"></ui-icon>${T(t[1],t[2],12.2)}</div>`});
define('push-button',`:host{height:22.5px;border:1px solid #ccc;border-radius:3px;background:linear-gradient(#fff,#e6e6e6);box-shadow:0 1px 1px #aaa;display:flex;justify-content:center;align-items:center;color:#333;flex:none}`,'<slot></slot>');
define('side-panels',`:host{width:192px;margin-left:8px;flex:none;height:594px;overflow:hidden;color:#555}
.p{background:#f8faf3;border:solid #cfcfcf;border-width:0 1px 2px 1px}.tree{height:461.5px;display:flex;flex-direction:column}
.r0{display:flex;height:10.5px;align-items:flex-end;padding-left:33px}.btns{display:flex;gap:4px;margin:auto 0 9px 46px}
.m{margin-top:3px;height:140px;border-top:1px solid #cfcfcf}.mh{height:28px;background:#cddba9;border-bottom:1px solid #b9beaa;padding-left:9px;display:flex;align-items:center;font-weight:700}
.f{display:flex;height:25px;padding-left:31px}.f ui-text{margin:2.5px 0 0 2.5px}`,
`<div class="p tree"><div class="r0"><ui-icon name="label" w="12" h="12" style="margin-bottom:6px"></ui-icon>${T('Screen4',39,12.2,'margin:0 0 2px 3px')}</div>${TREE.map((t,i)=>`<tree-row i="${i}" ${i==6?'sel':''}></tree-row>`).join('')}
<div class="btns"><push-button style="width:51px">${T('Rename',40,12.2)}</push-button><push-button style="width:42px">${T('Delete',31,12.2)}</push-button></div></div>
<div class="p m"><div class="mh">${T('Media',32,12.8)}</div><div style="height:8.5px"></div>
${[['images.jpg',53],['none.png',45],['danger2.png',61]].map(f=>`<div class="f">${I('pic')}${T(f[0],f[1],12.2)}</div>`).join('')}<push-button style="width:77px;margin:-3.5px 0 0 56px">${T('Upload File ...',65,12.2)}</push-button></div>`);

const lab=(t,w,h,pb=0)=>`<div class="l" style="height:${h}px;padding-bottom:${pb}px">${T(t,w,12.2)}${I('help','margin:0 0 8px 2px')}</div>`;
define('property-panel',`:host{width:192px;margin-left:8px;height:380.5px;background:#f8faf3;border:solid #cfcfcf;border-width:0 1px 2px 1px;flex:none;color:#555;overflow:hidden}
.h{height:27px;background:#edf1e1;border-bottom:1px solid #ccc;padding-left:8px;display:flex;flex-direction:column;justify-content:flex-end;padding-bottom:7.5px}
.ap{height:21px;background:#ccd98f;display:flex;align-items:center;padding-left:3.5px;color:#000}.tri{border:5px solid transparent;border-top:8px solid #555;border-bottom:0;margin-right:3.5px}
.b{padding:8px 0 0 7px}.l{display:flex;align-items:flex-end;padding-left:1px}
.s{width:65px;height:20px;border:1px solid #ccc;background:#fff;display:flex;align-items:center;padding-left:3px;border-radius:2px}.c{border:2px solid transparent;border-top:2.5px solid #555;border-bottom:0;margin-left:5px}
.i{width:132px;height:23px;border:1px solid #ccc;border-radius:3px;background:#fff;display:flex;align-items:center;padding-left:5px;box-shadow:inset 0 1px 1px #0001;color:#333}
.d{display:flex;height:16px;padding-left:1px}.d i{width:11px;height:16px;background:#000;margin-right:8px}`,
`<div class="h">${T('HorizontalArrangement4',124,12)}${T('(HorizontalArrangement)',131,12.8)}</div><div class="ap"><div class="tri"></div>${T('Appearance',57.5,12.2)}</div>
<div class="b">${lab('AlignHorizontal',75,20)}<div class="s">${T('Center : 3',46,12.2)}<div class="c"></div></div>
${lab('AlignVertical',62,23)}<div class="s" style="height:21px">${T('Center : 2',46,12.2)}<div class="c"></div></div>
${lab('BackgroundColor',84,24)}<div class="d"><i></i>${T('Default',35,12.2)}</div>
${lab('Height',32,25)}<div class="i">${T('Automatic...',47,9.8)}</div>${lab('Width',28,28)}<div class="i">${T('Fill parent...',47,9.8)}</div>${lab('Image',31,27.5)}<div class="i" style="height:23.5px">${T('None...',29,9.8)}</div>
${lab('Visible',33,30,2.5)}<svg width="12" height="12" viewBox="0 0 12 12" style="margin-left:1px;display:block"><rect width="12" height="12" rx="2" fill="#6b6b6b"/><path d="M2.500 6l2.500 2.700L9.500 3" fill="none" stroke="#fff" stroke-width="1.700"/></svg></div>`);

define('scroll-bar',`:host{width:15px;height:594px;background:#fcfcfc;margin-left:auto;display:flex;flex-direction:column;align-items:center;padding:10px 0 10px}
.u,.d{border:4.5px solid transparent;border-bottom:5px solid #858585;border-top:0}.d{border-bottom:0;border-top:5px solid #858585;margin-top:auto}.t{width:9px;height:331px;border-radius:5px;background:#8b8b8b;margin-top:57px}`,
`<div class="u"></div><div class="t"></div><div class="d"></div>`);

define('web-page',`:host{height:663px;width:1358px;margin:0 4px;border-radius:6px 6px 9px 9px;overflow:hidden;background:#e8e8e8;box-shadow:0 0 2px #999}
.main{height:598px;padding:4px 0 0 12px;display:flex;align-items:flex-start;background:repeating-linear-gradient(90deg,#fff2 0 1px,#0000 1px 3px,#00000006 3px 4px,#0000 4px 7px),repeating-linear-gradient(#fff2 0 1px,#0000 1px 2px,#00000005 2px 3px,#0000 3px 5px),#e6e6e6}
.foot{height:22px;background:linear-gradient(#f9f9f9,#e9e9e9);border-bottom:2px solid #ccd6f0;display:flex;justify-content:center;color:#8a8a8a;padding-top:1.5px}`,
`<site-header></site-header><div class="main"><palette-panel></palette-panel><viewer-panel></viewer-panel><side-panels></side-panels><property-panel></property-panel><scroll-bar></scroll-bar></div><div class="foot">${T('<u>Privacy Policy and Terms of Use</u>',156,12.2)}</div>`);

const APPS=[['folder',1],['edge',0],['store',0],['mailw',0],['chrm',0],['skype',1],['acro',1],['drop',1],['mirc',1]];
define('task-bar',`:host{height:41px;background:#1e1e1e;border-top:1px solid #8a8a8a;display:flex;align-items:center;color:#f2f2f2;font-family:"Noto Sans",sans-serif;overflow:hidden}
.w{width:48px;display:flex;justify-content:center;flex:none}.q{width:288px;height:40px;background:#f0f0f0;border:1px solid #bbb;display:flex;align-items:center;padding-left:11px;color:#444;flex:none}
.a{width:49.1px;height:40px;display:flex;justify-content:center;align-items:center;flex:none;position:relative}.a.on{background:linear-gradient(#4a4a4a,#4a4a4a) center/48px 100% no-repeat}
.a.u::after,.on::after{content:"";position:absolute;left:4.5px;right:4.5px;bottom:0;height:2px;background:#aaa}.on::after{left:.5px!important;right:.5px!important}
.n{position:relative}.n ui-text{position:absolute;left:12px;top:9.5px}`,
`<div class="w">${I('win')}</div><div class="q">${I('mag')}${T('Αναζήτηση',77,15,'margin-left:10px;line-height:20px')}</div><div class="w" style="margin-right:2px">${I('tview')}</div>
${APPS.map(a=>`<div class="a ${a[1]?'u':''} ${a[0]=='edge'?'on':''}">${I(a[0])}</div>`).join('')}
${I('wx','margin-left:78px')}${T('2°C',22,13.6,'margin-left:7px')}${T('Αραιές νεφώσεις',105,13.6,'margin-left:8px')}
${I('chev','margin-left:25px')}${I('meet','margin-left:13px')}${I('cloudg','margin-left:9px')}${I('cloud','margin-left:7px')}${I('net','margin-left:8px')}
${T('ENG',23,12.4,'margin-left:8px')}<div style="margin:0 14px 0 11px">${T('12:45 πμ',44,12.2,'margin:0 0 2px 6px')}${T('19/12/2023',57,12.2)}</div><div class="n">${I('note')}${T('2',7,11.5)}</div>`);

define('app-desktop',':host{width:1366px;height:768px;overflow:hidden;background:#f7f7f7;display:flex;flex-direction:column}task-bar{margin-top:auto}',
'<tab-strip></tab-strip><address-bar></address-bar><web-page></web-page><task-bar></task-bar>');
</script>
</body>
</html>
